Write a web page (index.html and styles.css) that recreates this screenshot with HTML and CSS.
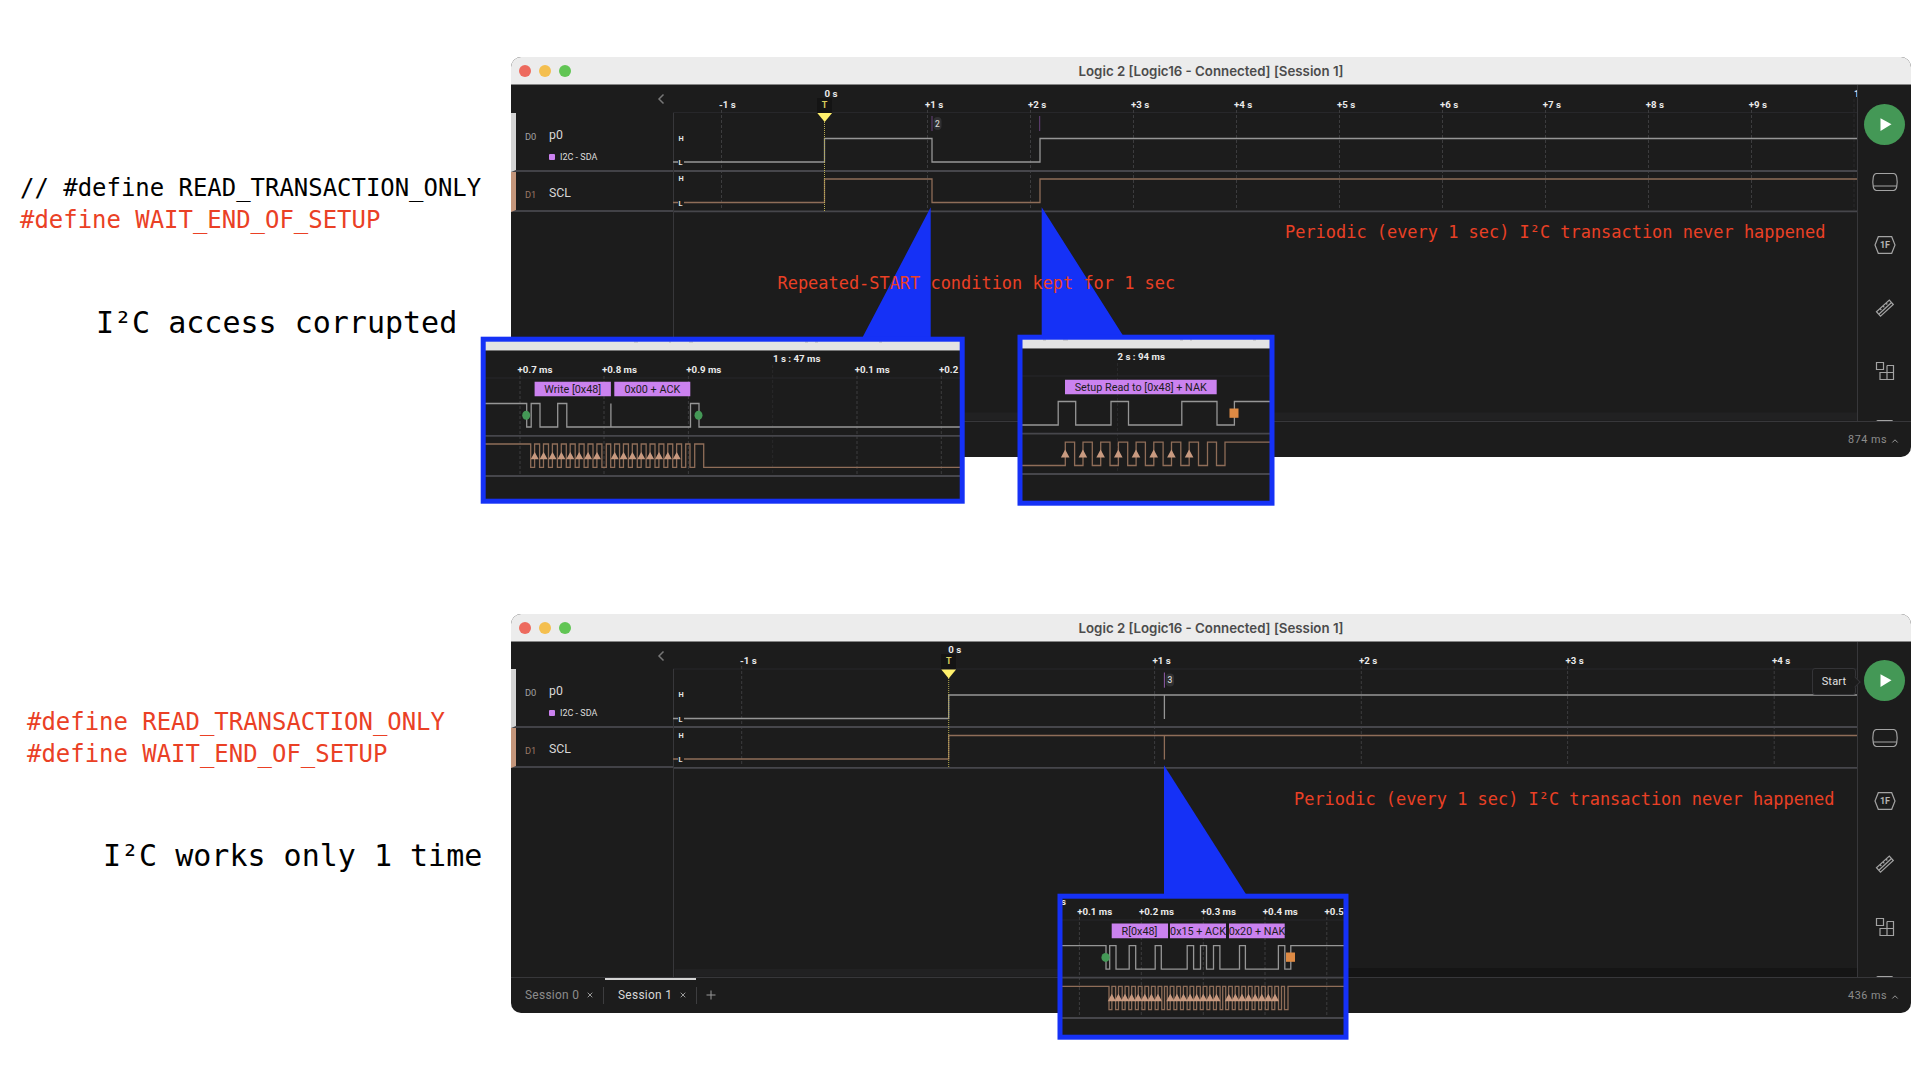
FILE: index.html
```html
<!DOCTYPE html>
<html lang="en">
<head>
<meta charset="utf-8">
<title>I²C access comparison</title>
<link rel="stylesheet" href="styles.css">
</head>
<body>
<svg class="defs" width="0" height="0">
  <symbol id="i-device" viewBox="0 0 30 30"><path d="M6.500 6.500h17q2.500 0 3.200 3.500q1 5 0 10q-.7 3.500-3.200 3.500h-17q-2.500 0-3.200-3.500q-1-5 0-10q.7-3.500 3.200-3.500zM3 19h24"/></symbol>
  <symbol id="i-ruler" viewBox="0 0 30 30"><path d="M6.500 18.700L19.300 7l4 4.500L10.500 23.200zM8.800 21.200L21.500 9.500M10 15.500l1.300 1.500M13 12.800l1.300 1.500M16 10l1.300 1.500"/></symbol>
  <symbol id="i-blocks" viewBox="0 0 30 30"><path d="M6.500 6.500h7v7h-7zM17 9.500h6.500v14H10v-7h13.500M17 9.500v14"/></symbol>
  <symbol id="i-note" viewBox="0 0 30 30"><rect x="7" y="1.500" width="15.500" height="26" rx="1"/></symbol>
</svg>

<section class="case case-a">
  <div class="notes">
    <p class="defines"><span class="off">// #define READ_TRANSACTION_ONLY</span><span>#define WAIT_END_OF_SETUP</span></p>
    <p class="verdict">I²C access corrupted</p>
  </div>
  <div class="window">
    <header class="titlebar"><i class="light red"></i><i class="light amber"></i><i class="light green"></i><h1>Logic 2 [Logic16 - Connected] [Session 1]</h1></header>
    <div class="workspace">
      <aside class="channels">
        <div class="chan-head"><svg width="8" height="12" viewBox="0 0 8 12"><path d="M6.500 1.500L2 6l4.500 4.500"/></svg></div>
        <div class="chan chan-0"><span class="id">D0</span><div><b>p0</b><small>I2C - SDA</small></div></div>
        <div class="chan chan-1"><span class="id">D1</span><div><b>SCL</b></div></div>
      </aside>
      <svg class="chart" width="1184" height="336" viewBox="673 85 1184 336">
        <path class="rule" d="M673 112.500H1857"/>
        <path class="grid" d="M721.500 110V210M927.500 110V210M1030.500 110V210M1133.500 110V210M1236.500 110V210M1339.500 110V210M1442.500 110V210M1545.500 110V210M1648.500 110V210M1751.500 110V210"/>
        <path class="grid faint" d="M1854 99V210"/>
        <g class="tick"><text x="719" y="107.500">-1 s</text><text x="824.500" y="96.700">0 s</text><text x="925" y="107.500">+1 s</text><text x="1028" y="107.500">+2 s</text><text x="1131" y="107.500">+3 s</text><text x="1234" y="107.500">+4 s</text><text x="1337" y="107.500">+5 s</text><text x="1440" y="107.500">+6 s</text><text x="1542.700" y="107.500">+7 s</text><text x="1645.700" y="107.500">+8 s</text><text x="1748.700" y="107.500">+9 s</text><text x="1854" y="96.700">1</text></g>
        <path class="sep" d="M673 171H1857M673 211.300H1857"/>
        <path class="pane" d="M673.500 113V421"/>
        <path class="sda" d="M673 162H824.500V138.500H932V162H1040V138.500H1857"/>
        <path class="scl" d="M673 202.500H824.500V179H932V202.500H1040V179H1857"/>
        <path class="mask" d="M678 158h6v8h-6zM678 199h6v8h-6z"/>
        <g class="level"><text x="678.500" y="140.800">H</text><text x="678.500" y="165.200">L</text><text x="678.500" y="181.200">H</text><text x="678.500" y="205.700">L</text></g>
        <path class="frame" d="M932 116V131M1039.700 116V131"/>
        <rect class="pill" x="933.500" y="117" width="8" height="13" rx="4"/><text class="count" x="937.500" y="126.600">2</text>
        <rect class="flag" x="817" y="98" width="15" height="15"/><text class="flag-t" x="824.500" y="107.800">T</text>
        <path class="flag-line" d="M824.500 122V212"/><path class="flag-tri" d="M817.300 113h14.800l-7.400 9z"/>
        <rect class="band" x="675" y="412.500" width="1182" height="8"/>
      </svg>
      <nav class="tools">
        <button class="play"><svg width="41" height="41" viewBox="0 0 41 41"><path d="M16.500 14.300l11 6-11 6.700z"/></svg></button>
        <svg class="icon"><use href="#i-device"/></svg>
        <svg class="icon" viewBox="0 0 30 30"><path d="M8.300 6.700h13.400l3.300 8.300-3.300 8.300H8.300L5 15z"/><text x="15" y="18.300" text-anchor="middle">1F</text></svg>
        <svg class="icon"><use href="#i-ruler"/></svg><svg class="icon"><use href="#i-blocks"/></svg><svg class="icon"><use href="#i-note"/></svg>
      </nav>
    </div>
    <footer class="statusbar"><span class="timing">874 ms<svg width="8" height="6" viewBox="0 0 8 6"><path d="M1.300 4.500L4 1.800l2.700 2.700"/></svg></span></footer>
  </div>

  <svg class="overlay" width="1920" height="540" viewBox="0 0 1920 540">
    <path class="beam" d="M930.700 207.300V337H862.700zM1041.700 207.300V336H1123.300z"/>
    <text class="remark" x="777.500" y="289">Repeated-START condition kept for 1 sec</text>
    <text class="remark" x="1285" y="238.300">Periodic (every 1 sec) I²C transaction never happened</text>
  </svg>
  <svg class="inset inset-1" width="486" height="169" viewBox="480 336 486 169">
    <rect class="inset-bg" x="483" y="339" width="479" height="162"/>
    <rect class="inset-bar" x="485" y="341" width="475" height="9.300"/><path class="bar-edge" d="M485 350.500H960"/>
    <path class="descender" d="M634 342h4M669 342h2M689 342h4M805 342h3M815 342h3M879 342h3"/>
    <path class="rule" d="M485 378H960"/>
    <path class="grid" d="M520 376V475M604 376V475M688.400 376V475M857 376V475M941.300 376V475"/><path class="grid faint" d="M772.700 365V475"/>
    <g class="tick"><text x="517.500" y="372.500">+0.7 ms</text><text x="602" y="372.500">+0.8 ms</text><text x="686.300" y="372.500">+0.9 ms</text><text x="773" y="361.700">1 s : 47 ms</text><text x="854.700" y="372.500">+0.1 ms</text><text x="939" y="372.500">+0.2</text></g>
    <path class="sep" d="M485 435.800H960M485 476H960"/>
    <path class="label-bg" d="M534.600 381.700h76.300v14.500h-76.300zM614.300 381.700h76v14.500h-76z"/>
    <g class="label"><text x="572.700" y="392.800">Write [0x48]</text><text x="652.300" y="392.800">0x00 + ACK</text></g>
    <path class="sda" d="M485 403.500H526.700V427H531.200V403.500H540V427H557.700V403.500H566.800V427H610.900V403.500V427H690.500V403.500H699V427H960"/>
    <path class="scl" d="M485 444H530.700v23.400h3.900v-23.400h5v23.400h3.900v-23.400h5v23.400h3.900v-23.400h5v23.400h3.900v-23.400h5v23.400h3.900v-23.400h5v23.400h3.900v-23.400h5v23.400h3.900v-23.400h5v23.400h3.900v-23.400h5v23.400H606.300v-23.400H610.700v23.400h3.900v-23.400h4.960v23.400h3.900v-23.400h4.960v23.400h3.900v-23.400h4.960v23.400h3.900v-23.400h4.960v23.400h3.900v-23.400h4.960v23.400h3.900v-23.400h4.960v23.400h3.900v-23.400h4.960v23.400h3.900v-23.400h4.960v23.400H685.700v-23.400H690v23.400H694.700v-23.400H703.700v23.400H960"/>
    <path class="arrows" d="M534.700 452l4 7.300h-8zm8.900 0l4 7.300h-8zm8.900 0l4 7.300h-8zm8.900 0l4 7.300h-8zm8.900 0l4 7.300h-8zm8.900 0l4 7.300h-8zm8.900 0l4 7.300h-8zm8.900 0l4 7.300h-8zM614.700 452l4 7.300h-8zm8.860 0l4 7.300h-8zm8.860 0l4 7.300h-8zm8.860 0l4 7.300h-8zm8.860 0l4 7.300h-8zm8.860 0l4 7.300h-8zm8.860 0l4 7.300h-8zm8.860 0l4 7.300h-8z"/>
    <g class="start"><ellipse cx="526.200" cy="415.300" rx="4" ry="4.500"/><ellipse cx="698.500" cy="415.300" rx="4" ry="4.500"/></g>
    <rect class="inset-frame" x="483.200" y="339.200" width="479" height="162"/>
  </svg>
  <svg class="inset inset-2" width="259" height="173" viewBox="1017 334 259 173">
    <rect class="inset-bg" x="1020" y="337" width="252" height="166"/>
    <rect class="inset-bar" x="1022" y="339" width="248" height="9.300"/><path class="bar-edge" d="M1022 348.500H1270"/>
    <path class="descender" d="M1043 340h3M1063 340h5M1180 340h3M1190 340h2M1253 340h3"/>
    <path class="rule" d="M1022 376H1270"/><path class="grid faint" d="M1117.500 363V473"/>
    <g class="tick"><text x="1117.500" y="360">2 s : 94 ms</text></g>
    <path class="sep" d="M1022 433.700H1270M1022 474H1270"/>
    <path class="label-bg" d="M1065 379.700h151.700v14.600h-151.700z"/>
    <g class="label"><text x="1140.700" y="390.800">Setup Read to [0x48] + NAK</text></g>
    <path class="sda" d="M1022 425H1058.200V401.500H1075.700V425H1111V401.500H1128.500V425H1181.800V401.500H1217V425H1234.400V401.500H1270"/>
    <path class="scl" d="M1022 465.500H1065.300v-23.400h9.300v23.400h8.400v-23.400h9.300v23.400h8.400v-23.400h9.300v23.400h8.400v-23.400h9.300v23.400h8.400v-23.400h9.300v23.400h8.400v-23.400h9.300v23.400h8.400v-23.400h9.300v23.400h8.400v-23.400h9.300v23.400H1207.500v-23.400H1216.500v23.400H1225v-23.400H1270"/>
    <path class="arrows" d="M1065.200 449.500l4.300 8h-8.600zm17.700 0l4.300 8h-8.600zm17.700 0l4.300 8h-8.600zm17.700 0l4.300 8h-8.600zm17.700 0l4.300 8h-8.600zm17.700 0l4.300 8h-8.600zm17.700 0l4.300 8h-8.600zm17.700 0l4.300 8h-8.600z"/>
    <rect class="stop" x="1229.500" y="408.500" width="9" height="9.300"/>
    <rect class="inset-frame" x="1020" y="337.200" width="252" height="166"/>
  </svg>
</section>

<section class="case case-b">
  <div class="notes">
    <p class="defines"><span>#define READ_TRANSACTION_ONLY</span><span>#define WAIT_END_OF_SETUP</span></p>
    <p class="verdict">I²C works only 1 time</p>
  </div>
  <div class="window">
    <header class="titlebar"><i class="light red"></i><i class="light amber"></i><i class="light green"></i><h1>Logic 2 [Logic16 - Connected] [Session 1]</h1></header>
    <div class="workspace">
      <aside class="channels">
        <div class="chan-head"><svg width="8" height="12" viewBox="0 0 8 12"><path d="M6.500 1.500L2 6l4.500 4.500"/></svg></div>
        <div class="chan chan-0"><span class="id">D0</span><div><b>p0</b><small>I2C - SDA</small></div></div>
        <div class="chan chan-1"><span class="id">D1</span><div><b>SCL</b></div></div>
      </aside>
      <svg class="chart" width="1184" height="335" viewBox="673 642 1184 335">
        <path class="rule" d="M673 669H1857"/>
        <path class="grid" d="M741.700 666V766M1154.600 666V766M1361.300 666V766M1567.600 666V766M1774.200 666V766"/>
        <g class="tick"><text x="740" y="664">-1 s</text><text x="948.300" y="653.200">0 s</text><text x="1152.500" y="664">+1 s</text><text x="1359" y="664">+2 s</text><text x="1565.500" y="664">+3 s</text><text x="1772" y="664">+4 s</text></g>
        <path class="sep" d="M673 727H1857M673 767.800H1857"/>
        <path class="pane" d="M673.500 669V977"/>
        <path class="sda" d="M673 718.500H948.700V695H1857M1164.400 695V719"/>
        <path class="scl" d="M673 759H948.700V735.500H1857M1164.400 735V759.500"/>
        <path class="mask" d="M678 714.500h6v8h-6zM678 755.500h6v8h-6z"/>
        <g class="level"><text x="678.500" y="697.300">H</text><text x="678.500" y="721.500">L</text><text x="678.500" y="737.700">H</text><text x="678.500" y="762.200">L</text></g>
        <path class="frame bright" d="M1164.400 672.500V687.700"/>
        <rect class="pill" x="1165.700" y="673.500" width="8.400" height="13" rx="4"/><text class="count" x="1169.900" y="683.100">3</text>
        <rect class="flag" x="941" y="654" width="15" height="15"/><text class="flag-t" x="948.800" y="664.200">T</text>
        <path class="flag-line" d="M948.700 678V768"/><path class="flag-tri" d="M941.300 669.500h14.800l-7.400 9z"/>
        <rect class="band" x="675" y="969" width="670" height="7.500"/><rect class="band dark" x="1345" y="968" width="512" height="9"/>
      </svg>
      <nav class="tools">
        <button class="play"><svg width="41" height="41" viewBox="0 0 41 41"><path d="M16.500 14.300l11 6-11 6.700z"/></svg></button>
        <span class="tooltip">Start</span>
        <svg class="icon"><use href="#i-device"/></svg>
        <svg class="icon" viewBox="0 0 30 30"><path d="M8.300 6.700h13.400l3.300 8.300-3.300 8.300H8.300L5 15z"/><text x="15" y="18.300" text-anchor="middle">1F</text></svg>
        <svg class="icon"><use href="#i-ruler"/></svg><svg class="icon"><use href="#i-blocks"/></svg><svg class="icon"><use href="#i-note"/></svg>
      </nav>
    </div>
    <footer class="statusbar">
      <div class="tab">Session 0<svg width="8" height="8" viewBox="0 0 8 8"><path d="M1.700 1.700l4.600 4.600M6.300 1.700L1.700 6.300"/></svg></div>
      <div class="tab active">Session 1<svg width="8" height="8" viewBox="0 0 8 8"><path d="M1.700 1.700l4.600 4.600M6.300 1.700L1.700 6.300"/></svg></div>
      <svg class="add" width="10" height="10" viewBox="0 0 10 10"><path d="M5 .5v9M.5 5h9"/></svg>
      <span class="timing">436 ms<svg width="8" height="6" viewBox="0 0 8 6"><path d="M1.300 4.500L4 1.800l2.700 2.700"/></svg></span>
    </footer>
  </div>

  <svg class="overlay" width="1920" height="540" viewBox="0 540 1920 540">
    <path class="beam" d="M1164 765.300V895H1246.500z"/>
    <text class="remark" x="1294" y="804.700">Periodic (every 1 sec) I²C transaction never happened</text>
  </svg>
  <svg class="inset inset-3" width="293" height="148" viewBox="1057 893 293 148">
    <rect class="inset-bg" x="1060" y="896" width="286" height="141"/>
    <path class="rule" d="M1062 920H1345"/>
    <path class="grid" d="M1079.400 917V1017M1141.300 917V1017M1203.300 917V1017M1265 917V1017M1326.800 917V1017"/>
    <g class="tick"><text x="1061" y="904.500">s</text><text x="1077.200" y="914.800">+0.1 ms</text><text x="1139" y="914.800">+0.2 ms</text><text x="1201" y="914.800">+0.3 ms</text><text x="1262.800" y="914.800">+0.4 ms</text><text x="1324.600" y="914.800">+0.5</text></g>
    <path class="sep" d="M1062 977.700H1345M1062 1018H1345"/>
    <path class="label-bg" d="M1111.700 923.500h56.300v14.700h-56.300zM1170 923.500h56v14.700h-56zM1229 923.500h55.700v14.700h-55.700z"/>
    <g class="label"><text x="1139.500" y="934.800">R[0x48]</text><text x="1198" y="934.800">0x15 + ACK</text><text x="1257" y="934.800">0x20 + NAK</text></g>
    <path class="sda" d="M1062 945.600H1106V969.200H1109.700V945.600H1116V969.200H1129.200V945.600H1135.700V969.200H1155.200V945.600H1161.300V969.200H1187.200V945.600H1193.600V969.200H1200.500V945.600H1206.500V969.200H1213.500V945.600H1219.900V969.200H1239.500V945.600H1245.400V969.200H1278.400V945.600H1284.800V969.200H1290.800V945.600H1345"/>
    <path class="scl" d="M1062 986.300H1109v23.400h2.900v-23.400h3.700v23.400h2.900v-23.400h3.700v23.400h2.900v-23.400h3.700v23.400h2.900v-23.400h3.700v23.400h2.900v-23.400h3.700v23.400h2.900v-23.400h3.700v23.400h2.900v-23.400h3.700v23.400h2.900v-23.400h3.700v23.400H1164.500v-23.400H1167.300v23.400h2.900v-23.400h3.700v23.400h2.900v-23.400h3.700v23.400h2.900v-23.400h3.700v23.400h2.900v-23.400h3.700v23.400h2.900v-23.400h3.700v23.400h2.900v-23.400h3.700v23.400h2.900v-23.400h3.700v23.400h2.900v-23.400h3.700v23.400H1222.700v-23.400H1225.700v23.400h2.900v-23.400h3.700v23.400h2.900v-23.400h3.700v23.400h2.900v-23.400h3.700v23.400h2.900v-23.400h3.700v23.400h2.900v-23.400h3.700v23.400h2.900v-23.400h3.700v23.400h2.900v-23.400h3.700v23.400h2.900v-23.400h3.700v23.400H1281.500v-23.400H1284.500v23.400H1288v-23.400H1345"/>
    <path class="arrows" d="M1111.800 993.700l4 7.600h-8zm6.600 0l4 7.600h-8zm6.600 0l4 7.600h-8zm6.600 0l4 7.600h-8zm6.600 0l4 7.600h-8zm6.600 0l4 7.600h-8zm6.600 0l4 7.600h-8zm6.600 0l4 7.600h-8zM1170.300 993.700l4 7.600h-8zm6.600 0l4 7.600h-8zm6.600 0l4 7.600h-8zm6.600 0l4 7.600h-8zm6.600 0l4 7.600h-8zm6.600 0l4 7.600h-8zm6.600 0l4 7.600h-8zm6.600 0l4 7.600h-8zM1228.800 993.700l4 7.600h-8zm6.600 0l4 7.600h-8zm6.600 0l4 7.600h-8zm6.600 0l4 7.600h-8zm6.600 0l4 7.600h-8zm6.600 0l4 7.600h-8zm6.600 0l4 7.600h-8zm6.600 0l4 7.600h-8z"/>
    <g class="start"><ellipse cx="1105.600" cy="957.400" rx="4.200" ry="4.500"/></g>
    <rect class="stop" x="1286" y="952.500" width="9" height="9.300"/>
    <rect class="inset-frame" x="1060" y="896.200" width="286" height="141"/>
  </svg>
</section>
</body>
</html>
```
FILE: styles.css
```css
* { box-sizing: border-box; }
body { margin: 0; width: 1920px; height: 1080px; background: #fff; overflow: hidden; font-family: Roboto, "Liberation Sans", sans-serif; }
.defs { display: block; height: 0; }
p, h1 { margin: 0; }

/* One comparison case: notes on the left, analyzer window on the right */
.case { position: relative; height: 540px; display: grid; grid-template-columns: 511px 1400px; align-items: start; padding-top: 57px; }
.case-b { padding-top: 74px; }
.notes { font-family: "DejaVu Sans Mono", monospace; white-space: pre; }
.case-a .notes { padding: 115px 0 0 20px; margin-top: -38px; }
.case-b .notes { padding: 92px 0 0 27px; margin-top: -38px; }
.defines { font-size: 23.950px; line-height: 32px; color: #ea4025; }
.defines span { display: block; }
.defines .off { color: #000; }
.verdict { font-size: 30px; line-height: 36px; padding: 31px 0 0 76px; }
.case-b .verdict { padding-top: 30px; }

/* Analyzer window */
.window { border-radius: 10px; overflow: hidden; background: #1c1c1c; color: #d8d8d8; }
.titlebar { height: 28px; background: #ececec; border-bottom: 1px solid #858585; display: flex; align-items: center; gap: 8px; padding: 0 8px; }
.titlebar h1 { flex: 1; margin-right: 60px; text-align: center; font: 600 13.270px Inter, sans-serif; color: #4b4b4b; }
.light { width: 12px; height: 12px; border-radius: 50%; }
.light.red { background: #ed6a5e; }
.light.amber { background: #f4bf4f; }
.light.green { background: #61c554; }
.workspace { display: flex; height: 336px; }
.case-b .workspace { height: 335px; }
.channels { width: 162px; }
.chan-head { height: 28px; display: flex; justify-content: flex-end; align-items: center; padding-right: 8px; }
.case-b .chan-head { height: 27px; }
.chan-head path { fill: none; stroke: #777; stroke-width: 1.500; }
.chan { display: flex; border-left: 5px solid; border-bottom: 2px solid #424247; padding-left: 9px; }
.chan .id { width: 24px; font-size: 9.300px; line-height: 12px; }
.chan b { display: block; font: 12.300px/16px Roboto, sans-serif; color: #d8d8d8; }
.chan small { display: flex; align-items: center; gap: 5px; margin-top: 8px; font-size: 9px; line-height: 12px; color: #dcdcdc; white-space: nowrap; }
.chan small::before { content: ""; width: 6px; height: 6px; border-radius: 1px; background: #cb82ef; }
.chan-0 { height: 59px; padding-top: 14px; border-left-color: #d4d4d4; }
.chan-0 .id { padding-top: 4px; color: #a2a2a2; }
.chan-1 { height: 40px; padding-top: 13px; border-left-color: #c4967b; }
.chan-1 .id { padding-top: 4px; color: #9a7866; }
.chart { display: block; flex: none; }

/* Right tool rail */
.tools { position: relative; width: 54px; border-left: 1px solid #37373a; overflow: visible; display: flex; flex-direction: column; align-items: center; padding-top: 19px; clip-path: inset(0 0 0 -60px); }
.case-b .tools { padding-top: 18px; }
.play { flex: none; width: 41px; height: 41px; margin-bottom: 22px; padding: 0; border: 0; border-radius: 50%; background: #449856; }
.play svg { display: block; fill: #fff; }
.icon { flex: none; width: 30px; height: 30px; margin-bottom: 33px; fill: none; stroke: #a3a3a3; stroke-width: 1.200; }
.icon text { fill: #b5b5b5; stroke: none; font: 700 9px Roboto, sans-serif; }
.tooltip { position: absolute; right: 55px; top: 26px; width: 44px; height: 27px; border: 1px solid #343437; border-radius: 3px; background: #1c1c1c; color: #e2e2e2; font-size: 11px; line-height: 25px; letter-spacing: .2px; text-align: center; }
.tooltip::after { content: ""; position: absolute; right: -4px; top: 9px; width: 7px; height: 7px; border: solid #343437; border-width: 1px 1px 0 0; background: #1c1c1c; transform: rotate(45deg); }
.statusbar { height: 36px; border-top: 1px solid #37373a; display: flex; align-items: center; padding-bottom: 1px; }
.tab { position: relative; display: flex; align-items: center; gap: 7px; height: 17px; border-right: 1px solid #3d3d3f; padding: 0 9px 0 14px; width: 93px; font-size: 11.900px; letter-spacing: .3px; white-space: nowrap; color: #8c8c8c; }
.tab svg, .add { flex: none; fill: none; stroke: #999; stroke-width: 1; }
.tab.active { color: #d8d8d8; }
.tab.active::before { content: ""; position: absolute; left: 1px; right: 0; top: -9px; height: 2px; background: #d4d4d4; }
.add { margin-left: 9px; }
.timing { margin-left: auto; padding-right: 12px; display: flex; align-items: center; gap: 4px; font-size: 10.800px; letter-spacing: .5px; color: #8c8c8c; }
.timing svg { fill: none; stroke: #999; margin-top: 3px; }

/* Waveforms */
.rule { stroke: #27272a; }
.grid { stroke: #3c3c3e; stroke-dasharray: 3 2; fill: none; }
.grid.faint { stroke: #29292b; }
.tick text { font: 700 9.700px Roboto, sans-serif; fill: #ebebeb; white-space: pre; }
.sep { stroke: #46464b; stroke-width: 1.800; }
.pane { stroke: #37373a; }
.sda, .scl { fill: none; stroke: #969696; stroke-width: 1.300; }
.scl { stroke: #8f6d58; }
.mask { fill: #1c1c1c; }
.level text { font: 700 7.300px Roboto, sans-serif; fill: #e4e4e4; }
.frame { stroke: #67437a; }
.frame.bright { stroke: #8f5ba8; }
.pill { fill: #303032; }
.count { font: 500 8.500px Roboto, sans-serif; fill: #d0d0d0; text-anchor: middle; }
.flag { fill: #141414; }
.flag-t { font: 700 9px Roboto, sans-serif; fill: #d8cc5c; text-anchor: middle; }
.flag-line { stroke: #b9ae52; stroke-dasharray: 1 1; }
.flag-tri { fill: #fff06c; }
.band { fill: #212122; }
.band.dark { fill: #151515; }

/* Callouts */
.overlay { position: absolute; left: 0; top: 0; }
.beam { fill: #1531f6; }
.remark { font: 16.960px "DejaVu Sans Mono", monospace; fill: #ea4025; white-space: pre; }
.inset { position: absolute; }
.inset-1 { left: 480px; top: 336px; }
.inset-2 { left: 1017px; top: 334px; }
.inset-3 { left: 1057px; top: 353px; }
.inset-bg { fill: #1c1c1c; }
.inset-bar { fill: #e3e3e3; }
.bar-edge { stroke: #777; }
.descender { stroke: #b5b5b5; }
.inset-frame { fill: none; stroke: #1531f6; stroke-width: 5; }
.label-bg { fill: #cb82ef; }
.label text { font: 10.800px Roboto, sans-serif; fill: #1c1c1c; text-anchor: middle; }
.arrows { fill: #c89a80; }
.start { fill: #449856; }
.stop { fill: #de8a44; }
```
